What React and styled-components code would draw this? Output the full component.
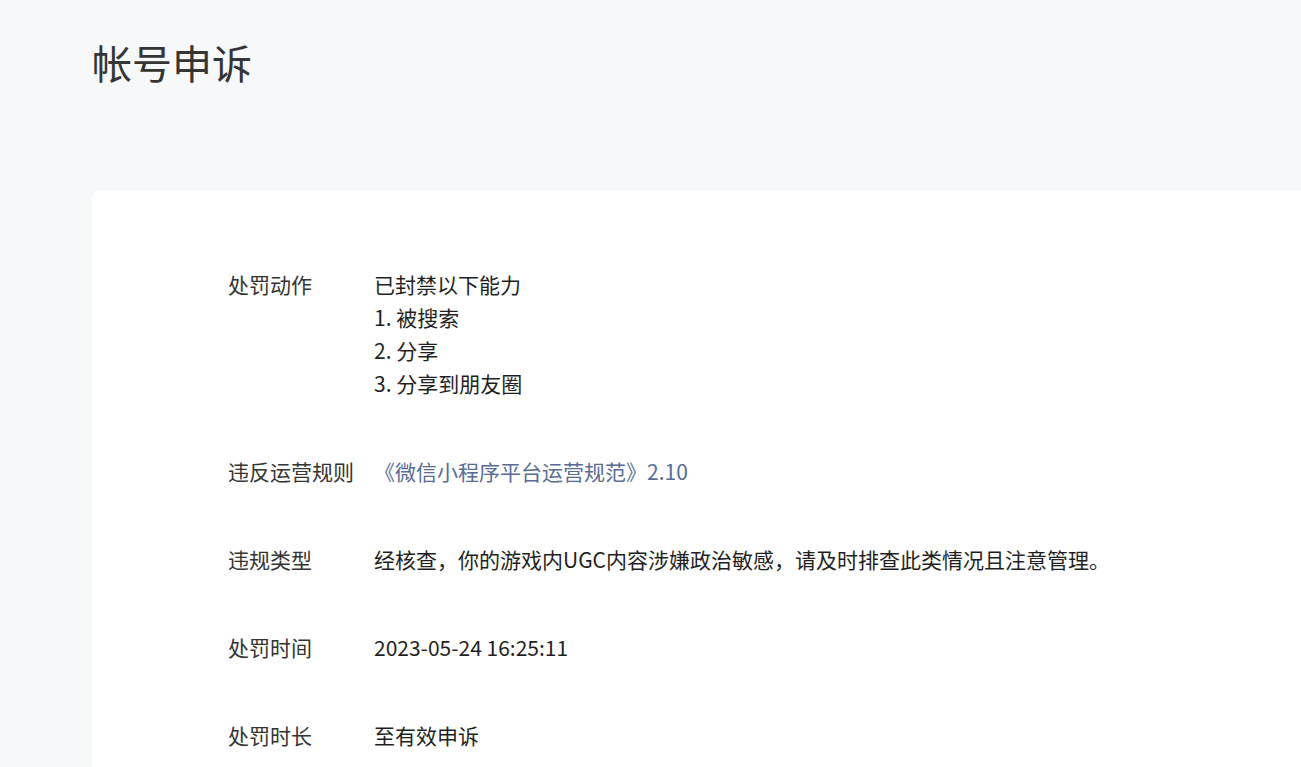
import React from "react";
import styled, { createGlobalStyle } from "styled-components";

const GlobalStyle = createGlobalStyle`
  html, body {
    margin: 0;
    padding: 0;
    background: #f7f8fa;
    overflow: hidden;
  }
  body {
    font-family: "Noto Sans CJK SC", "Noto Sans", sans-serif;
  }
`;

const Page = styled.div`
  min-height: 767px;
  padding-left: 92px;
  box-sizing: border-box;
`;

const Title = styled.h1`
  margin: 0;
  padding: 36px 0 0 0;
  font-size: 40px;
  line-height: 53px;
  font-weight: 400;
  color: #353535;
`;

const Card = styled.div`
  margin-top: 101px;
  background: #fff;
  border-radius: 8px 0 0 0;
  padding: 78px 0 60px 136px;
  min-height: 600px;
  box-sizing: border-box;
`;

const InfoList = styled.dl`
  margin: 0;
  display: grid;
  grid-template-columns: 146px 1fr;
  row-gap: 55px;
  font-size: 21px;
  line-height: 33px;
  color: #1f1f1f;
`;

const Label = styled.dt`
  margin: 0;
  color: #333;
`;

const Value = styled.dd`
  margin: 0;
`;

const Line = styled.div``;

const Link = styled.a`
  color: #576b95;
  text-decoration: none;
  cursor: pointer;
`;

const rows = [
  {
    label: "处罚动作",
    value: (
      <>
        <Line>已封禁以下能力</Line>
        <Line>1. 被搜索</Line>
        <Line>2. 分享</Line>
        <Line>3. 分享到朋友圈</Line>
      </>
    ),
  },
  {
    label: "违反运营规则",
    value: <Link>《微信小程序平台运营规范》2.10</Link>,
  },
  {
    label: "违规类型",
    value: "经核查，你的游戏内UGC内容涉嫌政治敏感，请及时排查此类情况且注意管理。",
  },
  { label: "处罚时间", value: "2023-05-24 16:25:11" },
  { label: "处罚时长", value: "至有效申诉" },
];

export default function App() {
  return (
    <>
      <GlobalStyle />
      <Page>
        <Title>帐号申诉</Title>
        <Card>
          <InfoList>
            {rows.map((row) => (
              <React.Fragment key={row.label}>
                <Label>{row.label}</Label>
                <Value>{row.value}</Value>
              </React.Fragment>
            ))}
          </InfoList>
        </Card>
      </Page>
    </>
  );
}
